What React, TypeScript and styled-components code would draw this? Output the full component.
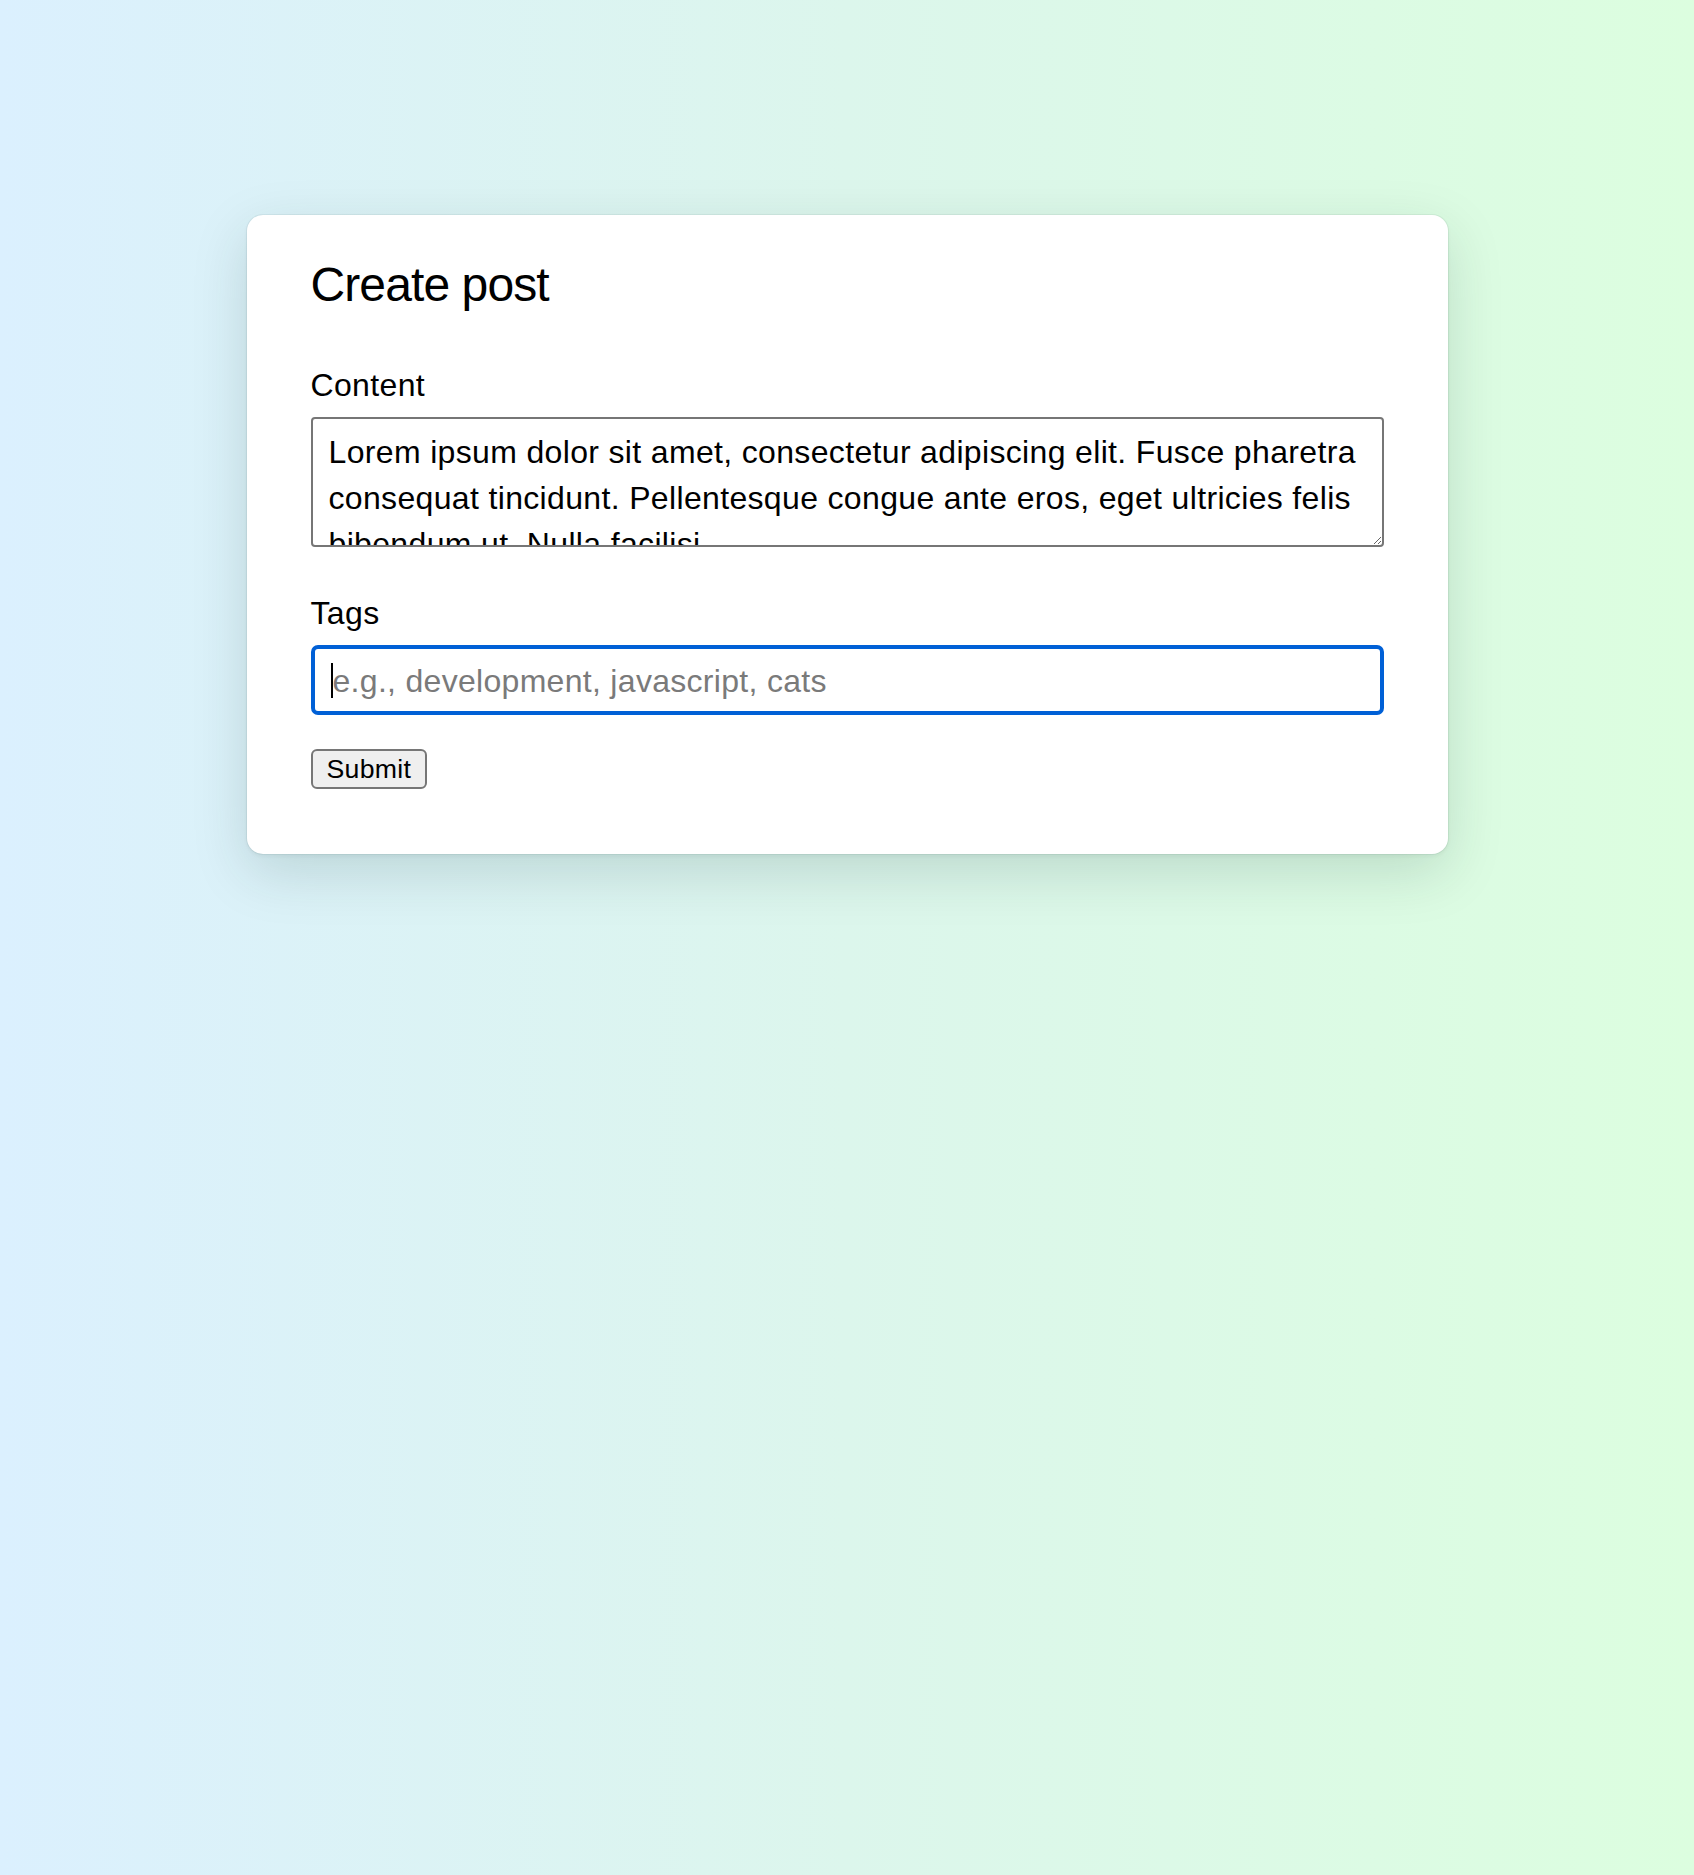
import React from "react";
import styled, { createGlobalStyle } from "styled-components";

const GlobalStyle = createGlobalStyle`
  html, body {
    margin: 0;
    padding: 0;
  }
  body {
    font-family: "Liberation Sans", Arial, Helvetica, sans-serif;
    color: #000;
  }
  * {
    box-sizing: border-box;
  }
`;

const Page = styled.div`
  min-height: 100vh;
  background: linear-gradient(90deg, #dbf0fe 0%, #dcf6ec 50%, #dcfedf 100%);
  padding-top: 215px;
  display: flex;
  justify-content: center;
  align-items: flex-start;
`;

const Card = styled.form`
  width: 1201px;
  background: #ffffff;
  border-radius: 16px;
  padding: 42px 64px 65px;
  box-shadow: 0 0 0 1px rgba(0, 40, 30, 0.05), 0 2px 4px rgba(0, 40, 30, 0.05),
    0 18px 56px rgba(0, 50, 40, 0.15);
  display: flex;
  flex-direction: column;
`;

const Title = styled.h1`
  margin: 0 0 52px;
  font-size: 48px;
  line-height: 56px;
  font-weight: 400;
  letter-spacing: -0.9px;
`;

const Field = styled.div<{ $gap: number }>`
  display: flex;
  flex-direction: column;
  gap: 12px;
  margin-bottom: ${(p) => p.$gap}px;
`;

const Label = styled.label`
  font-size: 32px;
  line-height: 40px;
  font-weight: 400;
  letter-spacing: 0.35px;
`;

const TextArea = styled.textarea`
  display: block;
  width: 100%;
  height: 130px;
  font-family: "Liberation Sans", Arial, Helvetica, sans-serif;
  font-size: 32px;
  line-height: 46px;
  letter-spacing: 0.34px;
  color: #000;
  padding: 10px 14px 10px 16px;
  border: 2px solid #767676;
  border-radius: 4px;
  background: #fff;
  overflow: hidden;
  scrollbar-width: none;
  resize: both;
  &:focus {
    outline: none;
  }
`;

const InputWrap = styled.div`
  position: relative;
  &::after {
    content: "";
    position: absolute;
    left: 20px;
    top: 18px;
    width: 2px;
    height: 35px;
    background: #000;
    pointer-events: none;
  }
`;

const TextInput = styled.input`
  display: block;
  width: 100%;
  height: 70px;
  font-family: "Liberation Sans", Arial, Helvetica, sans-serif;
  font-size: 32px;
  letter-spacing: 0.3px;
  color: #000;
  padding: 2px 16px 0 18px;
  border: 4px solid #0060d6;
  border-radius: 7px;
  background: #fff;
  outline: none;
  caret-color: transparent;
  &::placeholder {
    color: #7a7a7a;
  }
  &:focus {
    outline: none;
    border-color: #0060d6;
  }
`;

const SubmitButton = styled.button`
  align-self: flex-start;
  height: 40px;
  padding: 0 14px;
  font-family: "Liberation Sans", Arial, Helvetica, sans-serif;
  font-size: 26.67px;
  letter-spacing: 0.3px;
  color: #000;
  background: #efefef;
  border: 2px solid #767676;
  border-radius: 6px;
  cursor: pointer;
`;

const content =
  "Lorem ipsum dolor sit amet, consectetur adipiscing elit. Fusce pharetra consequat tincidunt. Pellentesque congue ante eros, eget ultricies felis bibendum ut. Nulla facilisi.";

export default function App() {
  return (
    <>
      <GlobalStyle />
      <Page>
        <Card onSubmit={(e) => e.preventDefault()}>
          <Title>Create post</Title>
          <Field $gap={46}>
            <Label htmlFor="content">Content</Label>
            <TextArea id="content" defaultValue={content} />
          </Field>
          <Field $gap={34}>
            <Label htmlFor="tags">Tags</Label>
            <InputWrap>
              <TextInput
                id="tags"
                type="text"
                placeholder="e.g., development, javascript, cats"
              />
            </InputWrap>
          </Field>
          <SubmitButton type="submit">Submit</SubmitButton>
        </Card>
      </Page>
    </>
  );
}
